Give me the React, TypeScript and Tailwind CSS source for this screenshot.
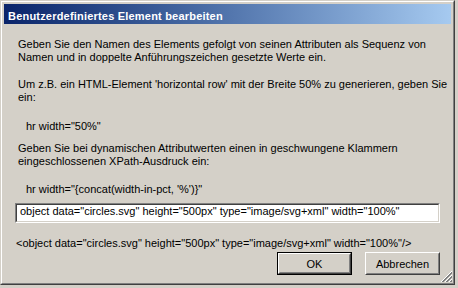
import React from "react";

function Btn({ children, def }: { children: React.ReactNode; def?: boolean }) {
  const inner = (
    <div className="flex-1 flex border-t border-l border-t-white border-l-white border-r border-b border-r-[#404040] border-b-[#404040]">
      <div className="flex-1 flex items-center justify-center border-t border-l border-t-[#d4d0c8] border-l-[#d4d0c8] border-r border-b border-r-[#808080] border-b-[#808080] leading-[13px] pt-[1px]">
        {children}
      </div>
    </div>
  );
  return (
    <div className={"w-[75px] h-[23px] flex " + (def ? "border border-black" : "")}>
      {inner}
    </div>
  );
}

export default function App() {
  return (
    <div className="w-[458px] h-[288px] bg-[#d4d0c8] font-['Liberation_Sans',Arial,sans-serif] text-[11px] leading-[13px] text-black">
      <div className="w-[455px] h-[285px] flex border-t border-l border-t-[#d4d0c8] border-l-[#d4d0c8] border-r border-b border-r-[#404040] border-b-[#404040]">
        <div className="relative flex-1 flex flex-col p-[2px] border-t border-l border-t-white border-l-white border-r border-b border-r-[#808080] border-b-[#808080]">
          <div className="h-[20px] shrink-0 bg-linear-to-r from-[#0a246a] to-[#a6caf0] text-white font-bold tracking-[0.2px] pl-[4px] pt-[6px] whitespace-nowrap">
            Benutzerdefiniertes Element bearbeiten
          </div>
          <div className="flex flex-col pl-[11px] whitespace-nowrap">
            <div className="mt-[14px] ml-[3px]">
              Geben Sie den Namen des Elements gefolgt von seinen Attributen als Sequenz von
              <br />
              Namen und in doppelte Anführungszeichen gesetzte Werte ein.
            </div>
            <div className="mt-[14px] ml-[3px]">
              Um z.B. ein HTML-Element 'horizontal row' mit der Breite 50% zu generieren, geben Sie
              <br />
              ein:
            </div>
            <div className="mt-[16px] ml-[11px]">hr width="50%"</div>
            <div className="mt-[9px] ml-[3px]">
              Geben Sie bei dynamischen Attributwerten einen in geschwungene Klammern
              <br />
              eingeschlossenen XPath-Ausdruck ein:
            </div>
            <div className="mt-[15px] ml-[11px]">hr width="{"{"}concat(width-in-pct, '%'){"}"}"</div>
            <div className="mt-[7px] w-[425px] h-[20px] flex border-t border-l border-t-[#808080] border-l-[#808080] border-r border-b border-r-white border-b-white">
              <div className="flex-1 bg-white border-t border-l border-t-[#404040] border-l-[#404040] border-r border-b border-r-[#d4d0c8] border-b-[#d4d0c8] pl-[3px] overflow-hidden">
                object data="circles.svg" height="500px" type="image/svg+xml" width="100%"
              </div>
            </div>
            <div className="mt-[14px] ml-[1px]">
              &lt;object data="circles.svg" height="500px" type="image/svg+xml" width="100%"/&gt;
            </div>
            <div className="mt-[2px] flex justify-end gap-[13px] pr-[11px]">
              <Btn def>OK</Btn>
              <Btn>Abbrechen</Btn>
            </div>
          </div>
          <svg className="absolute right-[0px] bottom-[0px]" width="13" height="13" viewBox="0 0 13 13">
            <line x1="12" y1="1" x2="1" y2="12" stroke="#ffffff" />
            <line x1="12" y1="2" x2="2" y2="12" stroke="#808080" />
            <line x1="12" y1="3" x2="3" y2="12" stroke="#808080" />
            <line x1="12" y1="5" x2="5" y2="12" stroke="#ffffff" />
            <line x1="12" y1="6" x2="6" y2="12" stroke="#808080" />
            <line x1="12" y1="7" x2="7" y2="12" stroke="#808080" />
            <line x1="12" y1="9" x2="9" y2="12" stroke="#ffffff" />
            <line x1="12" y1="10" x2="10" y2="12" stroke="#808080" />
            <line x1="12" y1="11" x2="11" y2="12" stroke="#808080" />
          </svg>
        </div>
      </div>
    </div>
  );
}
